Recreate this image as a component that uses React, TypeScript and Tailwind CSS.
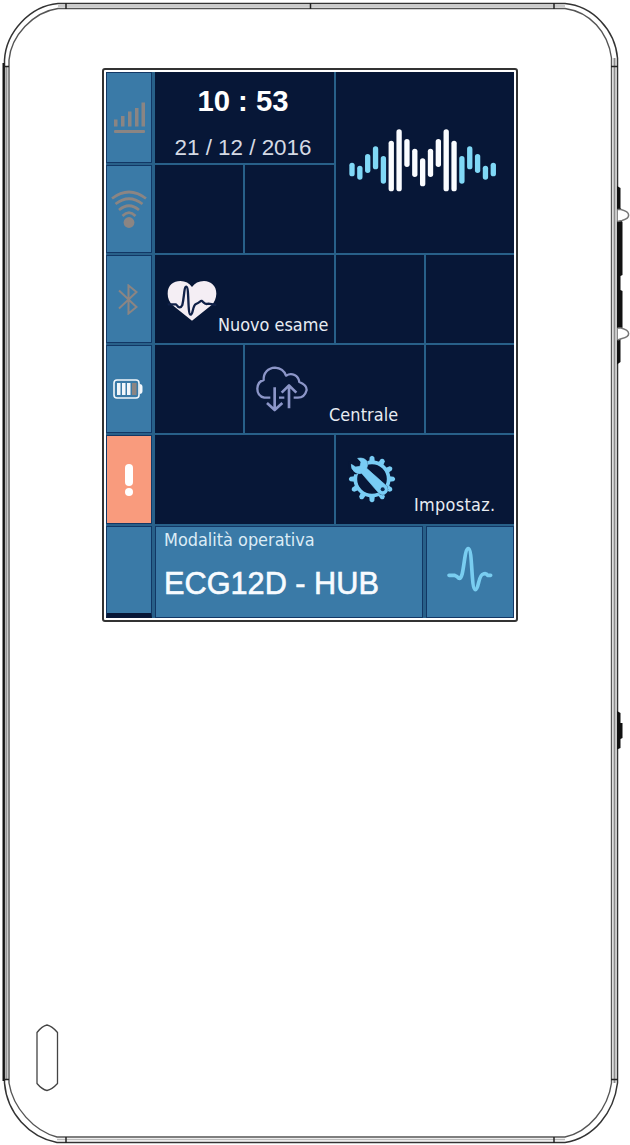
import type { ReactNode } from "react";

const waveBars: [number, number][] = [
  [308, 348], [317, 358], [282, 338], [259, 327], [288, 370], [242, 393], [208, 393],
  [237, 320], [266, 350], [295, 378], [266, 350], [237, 320], [208, 393], [242, 393],
  [288, 370], [259, 327], [282, 338], [317, 358], [308, 348],
];

function DeviceBody() {
  return (
    <svg className="absolute inset-0" width="630" height="1145" viewBox="0 0 630 1145" fill="none" aria-hidden="true">
      <path d="M58 3.5H565C593 6 615 30 617.5 58V1083C614 1112 594 1138 565 1142.500H57C29 1137 7 1113 4.500 1083V60C6 32 30 6 58 3.500Z" stroke="#333" strokeWidth="1.5" />
      <path d="M58 8.500H565C590 12 608 32 611.500 58V1083C608 1108 589 1132 565 1137H57C34 1131 13 1108 9 1083V60C11 36 33 12 58 8.500Z" stroke="#555" strokeWidth="1.4" />
      <path d="M58 6H565M57 1139.500H565" stroke="#bbb" strokeWidth="1.5" />
      <path d="M614.500 58V1083" stroke="#8c8c8c" strokeWidth="2" />
      <path d="M6.500 66V1080" stroke="#999" strokeWidth="2" />
      <path d="M3.500 63V1081" stroke="#151515" strokeWidth="2" />
      <path d="M66 3V9M310.500 3V9M554 3V9M66 1137V1143M554 1137V1143M4 66.500H9M611 66.500H618M4 1079.500H9M611 1079.500H618" stroke="#222" strokeWidth="1.500" />
      <path d="M617 186L620.500 188V208L622 210V221.500L622.500 222V275L620.500 276V290L622.500 291V327L620.500 340V362L617 364.500Z" fill="#111" />
      <path d="M617.500 209.500L621 209.500C631 212 631 218 622 220.500L617.500 221.500" fill="#fff" stroke="#777" strokeWidth="1.500" />
      <path d="M617.500 328L621 328C631 330.500 631 336.500 622 338.500L617.500 340" fill="#fff" stroke="#777" strokeWidth="1.500" />
      <path d="M617 711L620.500 713V723H622.500V738L620.500 739V748L617 749.500Z" fill="#111" />
      <path d="M37 1032.500Q42 1026 47 1025Q52 1026 57.500 1032.500V1083.500Q52 1089.500 47 1090.500Q42 1089.500 37 1083.500Z" stroke="#444" strokeWidth="1.300" />
    </svg>
  );
}

function SideCell({ children, alert = false }: { children?: ReactNode; alert?: boolean }) {
  return (
    <div className={`flex items-center justify-center border border-[#123765] mr-[1px] ${alert ? "bg-[#f99b7d]" : "bg-[#3a7aa7]"}`}>
      {children}
    </div>
  );
}

function Signal() {
  return (
    <svg width="32" height="32" viewBox="0 0 32 32" fill="#8b8583">
      <rect x="1" y="17.500" width="3.500" height="7" />
      <rect x="8" y="14" width="3.500" height="10.500" />
      <rect x="15" y="9.500" width="3.500" height="15" />
      <rect x="22" y="6" width="3.500" height="18.500" />
      <rect x="28.500" y="0.500" width="3.500" height="24" />
      <rect x="1" y="28" width="31" height="3" rx="1" />
    </svg>
  );
}

function Wifi() {
  return (
    <svg width="36" height="38" viewBox="0 0 36 38" className="-mt-[1px]" fill="none" stroke="#8b8583" strokeWidth="2.700">
      <path d="M1 8.500Q18 -4.500 35 8.500M4.500 14Q18 3.500 31.500 14M8 20Q18 11.500 28 20M11.500 26Q18 19.500 24.500 26" />
      <circle cx="18" cy="32.500" r="5.400" fill="#8b8583" stroke="none" />
    </svg>
  );
}

function Bluetooth() {
  return (
    <svg width="20" height="31" viewBox="0 0 20 31" className="mr-[2px]" fill="none" stroke="#8b8583" strokeWidth="2">
      <path d="M1 6.500L18.500 23L10.500 29.500V1.500L18.500 8L1 24.500" />
    </svg>
  );
}

function Battery() {
  return (
    <svg width="30" height="20" viewBox="0 0 30 20" className="mr-[2px]" fill="none">
      <rect x="1" y="1" width="25" height="18" rx="3" stroke="#f2f7fb" strokeWidth="1.600" />
      <path d="M26.500 5Q29.500 5 29.500 8V12Q29.500 15 26.500 15Z" fill="#f2f7fb" />
      <path d="M4 4H7.500V16H4ZM9 4H12.500V16H9ZM14 4H17.500V16H14Z" fill="#f2f7fb" />
      <path d="M19 4H23.500V16H19Z" fill="#8b8583" />
    </svg>
  );
}

function Heart() {
  return (
    <svg width="50" height="42" viewBox="215 91 150 126">
      <path d="M290 213L232 167Q217 152 217 132C217 105 235 95 255 94Q278 94 290 112Q302 94 326 94C347 95 363 108 363 132Q362 153 349 166Z" fill="#f4eef4" />
      <path d="M217 164H242Q254 181 261 166C267 141 266 111 273 111C282 112 276 195 286 195C294 194 291 168 302 163Q309 160 315 155Q319 151 324 158Q330 165 339 162L363 166" fill="none" stroke="#102148" strokeWidth="7" strokeLinejoin="round" />
    </svg>
  );
}

function CloudSync() {
  return (
    <svg width="52" height="46" viewBox="483 348 156 138" fill="none" stroke="#8c96c8" strokeWidth="7" strokeLinejoin="round">
      <path d="M526 443H508C492 439 487 428 487 416C488 401 497 392 506 390C505 369 519 354 540 353C556 354 568 363 573 377C591 366 610 377 613 396C626 401 635 409 635 420C631 435 620 444 606 443H596M552 443H568" />
      <path d="M539 412V480M516 459L539 480L562 459M582 475V407M560 428L582 406L604 428" strokeWidth="8" />
    </svg>
  );
}

function GearWrench() {
  return (
    <svg width="48" height="48" viewBox="69 617 144 144">
      <circle cx="141" cy="689" r="50" fill="none" stroke="#79cdf5" strokeWidth="11" />
      {Array.from({ length: 12 }, (_, i) => (
        <path key={i} d="M132 643L134 624Q141 615 148 624L150 643Z" fill="#79cdf5" transform={`rotate(${i * 30} 141 689)`} />
      ))}
      <path d="M71 638L98 617L120 610V640L95 675L70 675Z" fill="#071737" />
      <path d="M79 645L92 653L105 651L108 638L98 627Q119 623 127 638Q130 648 125 657L185 710Q192 722 184 731Q174 741 162 732L110 672Q99 676 89 668Q77 658 79 645Z" fill="#79cdf5" stroke="#071737" strokeWidth="3" />
      <path d="M79 645L92 653L105 651L108 638L98 627Q119 623 127 638Q130 648 125 657L185 710Q192 722 184 731Q174 741 162 732L110 672Q99 676 89 668Q77 658 79 645Z" fill="#79cdf5" stroke="#79cdf5" strokeWidth="2" />
      <circle cx="173" cy="720" r="6" fill="#0c2a50" />
    </svg>
  );
}

const label = "font-['DejaVu_Sans_Condensed','DejaVu_Sans',sans-serif] [font-stretch:condensed] whitespace-nowrap text-[17.9px] leading-[20px]";
const cell = "bg-[#071737]";

export default function App() {
  return (
    <div className="relative h-[1145px] w-[630px] overflow-hidden bg-white pt-[68px] pl-[102px] font-['Liberation_Sans',Arial,sans-serif]">
      <DeviceBody />
      <main className="relative h-[554px] w-[416px] rounded-[3px] border-2 border-[#333] bg-white p-[2px]">
        <div className="grid h-[546px] w-[408px] grid-cols-[47px_88px_89px_88px_88px] grid-rows-[91px_88px_88px_88px_89px_92px] gap-[2px] bg-[#286089]">
          <SideCell><Signal /></SideCell>
          <div className={`${cell} col-span-2 flex flex-col items-center text-white`}>
            <div className="mt-[13px] mr-[3px] text-[29.300px] leading-[32px] font-bold whitespace-pre">10 : 53</div>
            <div className="mt-[18px] mr-[3px] text-[22.400px] leading-[26px] text-[#d5dae4]">21 / 12 / 2016</div>
          </div>
          <div className={`${cell} col-span-2 row-span-2`}>
            <svg width="178" height="181" viewBox="33 36 534 543" strokeWidth="16" strokeLinecap="round">
              {waveBars.map(([top, bottom], i) => (
                <path key={i} d={`M${81 + i * 23.55} ${top + 8}V${bottom - 7}`} stroke={i > 4 && i < 14 ? "#fafcff" : "#80d8f6"} />
              ))}
            </svg>
          </div>

          <SideCell><Wifi /></SideCell>
          <div className={cell} />
          <div className={cell} />

          <SideCell><Bluetooth /></SideCell>
          <div className={`${cell} col-span-2 flex items-start pl-[12px]`}>
            <span className="mt-[25px] shrink-0"><Heart /></span>
            <span className={`${label} mt-[60px] ml-[1px] text-[#e8ecf2]`}>Nuovo esame</span>
          </div>
          <div className={cell} />
          <div className={cell} />

          <SideCell><Battery /></SideCell>
          <div className={cell} />
          <div className={`${cell} col-span-2 flex items-start pl-[11px]`}>
            <span className="mt-[21px] shrink-0"><CloudSync /></span>
            <span className={`${label} mt-[60px] ml-[21px] tracking-[0.1px] text-[#e8ecf2]`}>Centrale</span>
          </div>
          <div className={cell} />

          <SideCell alert>
            <svg width="10" height="32" viewBox="0 0 10 32" fill="#fff">
              <rect x="1" width="8" height="22" rx="4" />
              <circle cx="5" cy="28" r="4" />
            </svg>
          </SideCell>
          <div className={`${cell} col-span-2`} />
          <div className={`${cell} col-span-2 flex items-start pl-[12px]`}>
            <span className="mt-[20px] shrink-0"><GearWrench /></span>
            <span className={`${label} mt-[60px] ml-[18px] tracking-[0.3px] text-[#e8ecf2]`}>Impostaz.</span>
          </div>

          <div className="mr-[1px] border border-b-[5px] border-[#123765] border-b-[#071737] bg-[#3a7aa7]" />
          <div className="col-span-3 mr-[1px] border border-[#123765] bg-[#3a7aa7] pl-[8px]">
            <div className={`${label} mt-[3px] text-[#dcecf6]`}>Modalità operativa</div>
            <div className="mt-[17px] text-[30.700px] leading-[34px] whitespace-pre text-[#f7fbff] [-webkit-text-stroke:0.6px_#f7fbff]">ECG12D - HUB</div>
          </div>
          <div className="border border-[#123765] bg-[#3a7aa7]">
            <svg width="86" height="90" viewBox="306 36 258 270" fill="none" stroke="#79cdf0" strokeWidth="11" strokeLinecap="round" strokeLinejoin="round">
              <path d="M372 181H388Q396 184 402 190C418 194 416 101 430 101C443 101 438 224 451 224C462 223 459 180 475 177Q484 174 488 181H497" />
            </svg>
          </div>
        </div>
      </main>
    </div>
  );
}
